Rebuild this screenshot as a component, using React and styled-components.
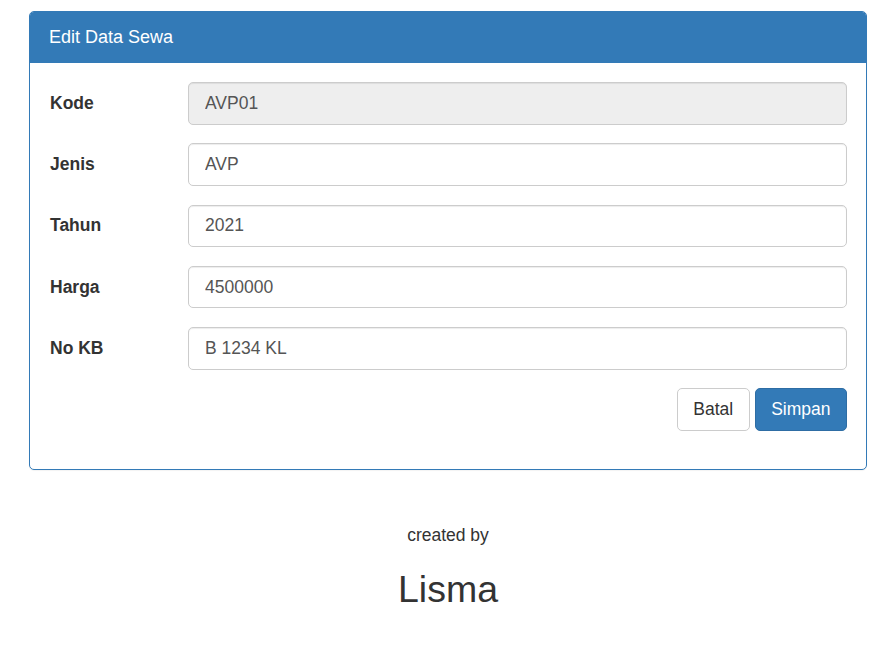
import React from "react";
import styled, { createGlobalStyle } from "styled-components";

const GlobalStyle = createGlobalStyle`
  * {
    box-sizing: border-box;
  }
  body {
    margin: 0;
    background: #fff;
    color: #333;
    font-family: "Liberation Sans", Arial, Helvetica, sans-serif;
    font-size: 17.5px;
    line-height: 1.42857;
  }
`;

const Page = styled.div`
  padding: 11px 22px 0 29px;
`;

const Panel = styled.div`
  border: 1px solid #337ab7;
  border-radius: 5px;
  background: #fff;
  box-shadow: 0 1px 1px rgba(0, 0, 0, 0.05);
`;

const PanelHeading = styled.div`
  background: #337ab7;
  color: #fff;
  padding: 12px 19px 13px;
  border-top-left-radius: 4px;
  border-top-right-radius: 4px;
`;

const PanelTitle = styled.h3`
  margin: 0;
  font-size: 18px;
  font-weight: 400;
  line-height: 26px;
`;

const PanelBody = styled.div`
  padding: 19px 19px 18.75px;
`;

const FormRow = styled.div`
  display: grid;
  grid-template-columns: 139px 1fr;
  align-items: center;
  margin-bottom: 18.75px;
  height: 42.5px;
`;

const Label = styled.label`
  font-weight: 700;
  font-size: 17.5px;
  padding-left: 1px;
`;

const Input = styled.input`
  display: block;
  width: 100%;
  height: 42.5px;
  padding: 8px 16px;
  font-family: inherit;
  font-size: 17.5px;
  color: #555;
  background: ${(p) => (p.disabled ? "#eee" : "#fff")};
  border: 1px solid #ccc;
  border-radius: 5px;
  box-shadow: inset 0 1px 1px rgba(0, 0, 0, 0.075);
  outline: none;
`;

const Actions = styled.div`
  display: flex;
  justify-content: flex-end;
  gap: 5px;
  margin-bottom: 19px;
`;

const Button = styled.button`
  height: 43px;
  padding: 0 15.5px;
  font-family: inherit;
  font-size: 17.5px;
  border-radius: 5px;
  cursor: pointer;
  border: 1px solid ${(p) => (p.primary ? "#2e6da4" : "#ccc")};
  background: ${(p) => (p.primary ? "#337ab7" : "#fff")};
  color: ${(p) => (p.primary ? "#fff" : "#333")};
`;

const Footer = styled.div`
  text-align: center;
  padding-top: 53px;
`;

const Credit = styled.p`
  margin: 0;
  font-size: 17.5px;
  line-height: 25px;
`;

const Author = styled.h2`
  margin: 21px 0 0;
  font-size: 37.5px;
  font-weight: 400;
  line-height: 41px;
`;

const fields = [
  { label: "Kode", value: "AVP01", disabled: true },
  { label: "Jenis", value: "AVP" },
  { label: "Tahun", value: "2021" },
  { label: "Harga", value: "4500000" },
  { label: "No KB", value: "B 1234 KL" },
];

export default function App() {
  return (
    <Page>
      <GlobalStyle />
      <Panel>
        <PanelHeading>
          <PanelTitle>Edit Data Sewa</PanelTitle>
        </PanelHeading>
        <PanelBody>
          {fields.map((f) => (
            <FormRow key={f.label}>
              <Label>{f.label}</Label>
              <Input defaultValue={f.value} disabled={f.disabled} />
            </FormRow>
          ))}
          <Actions>
            <Button>Batal</Button>
            <Button primary>Simpan</Button>
          </Actions>
        </PanelBody>
      </Panel>
      <Footer>
        <Credit>created by</Credit>
        <Author>Lisma</Author>
      </Footer>
    </Page>
  );
}
